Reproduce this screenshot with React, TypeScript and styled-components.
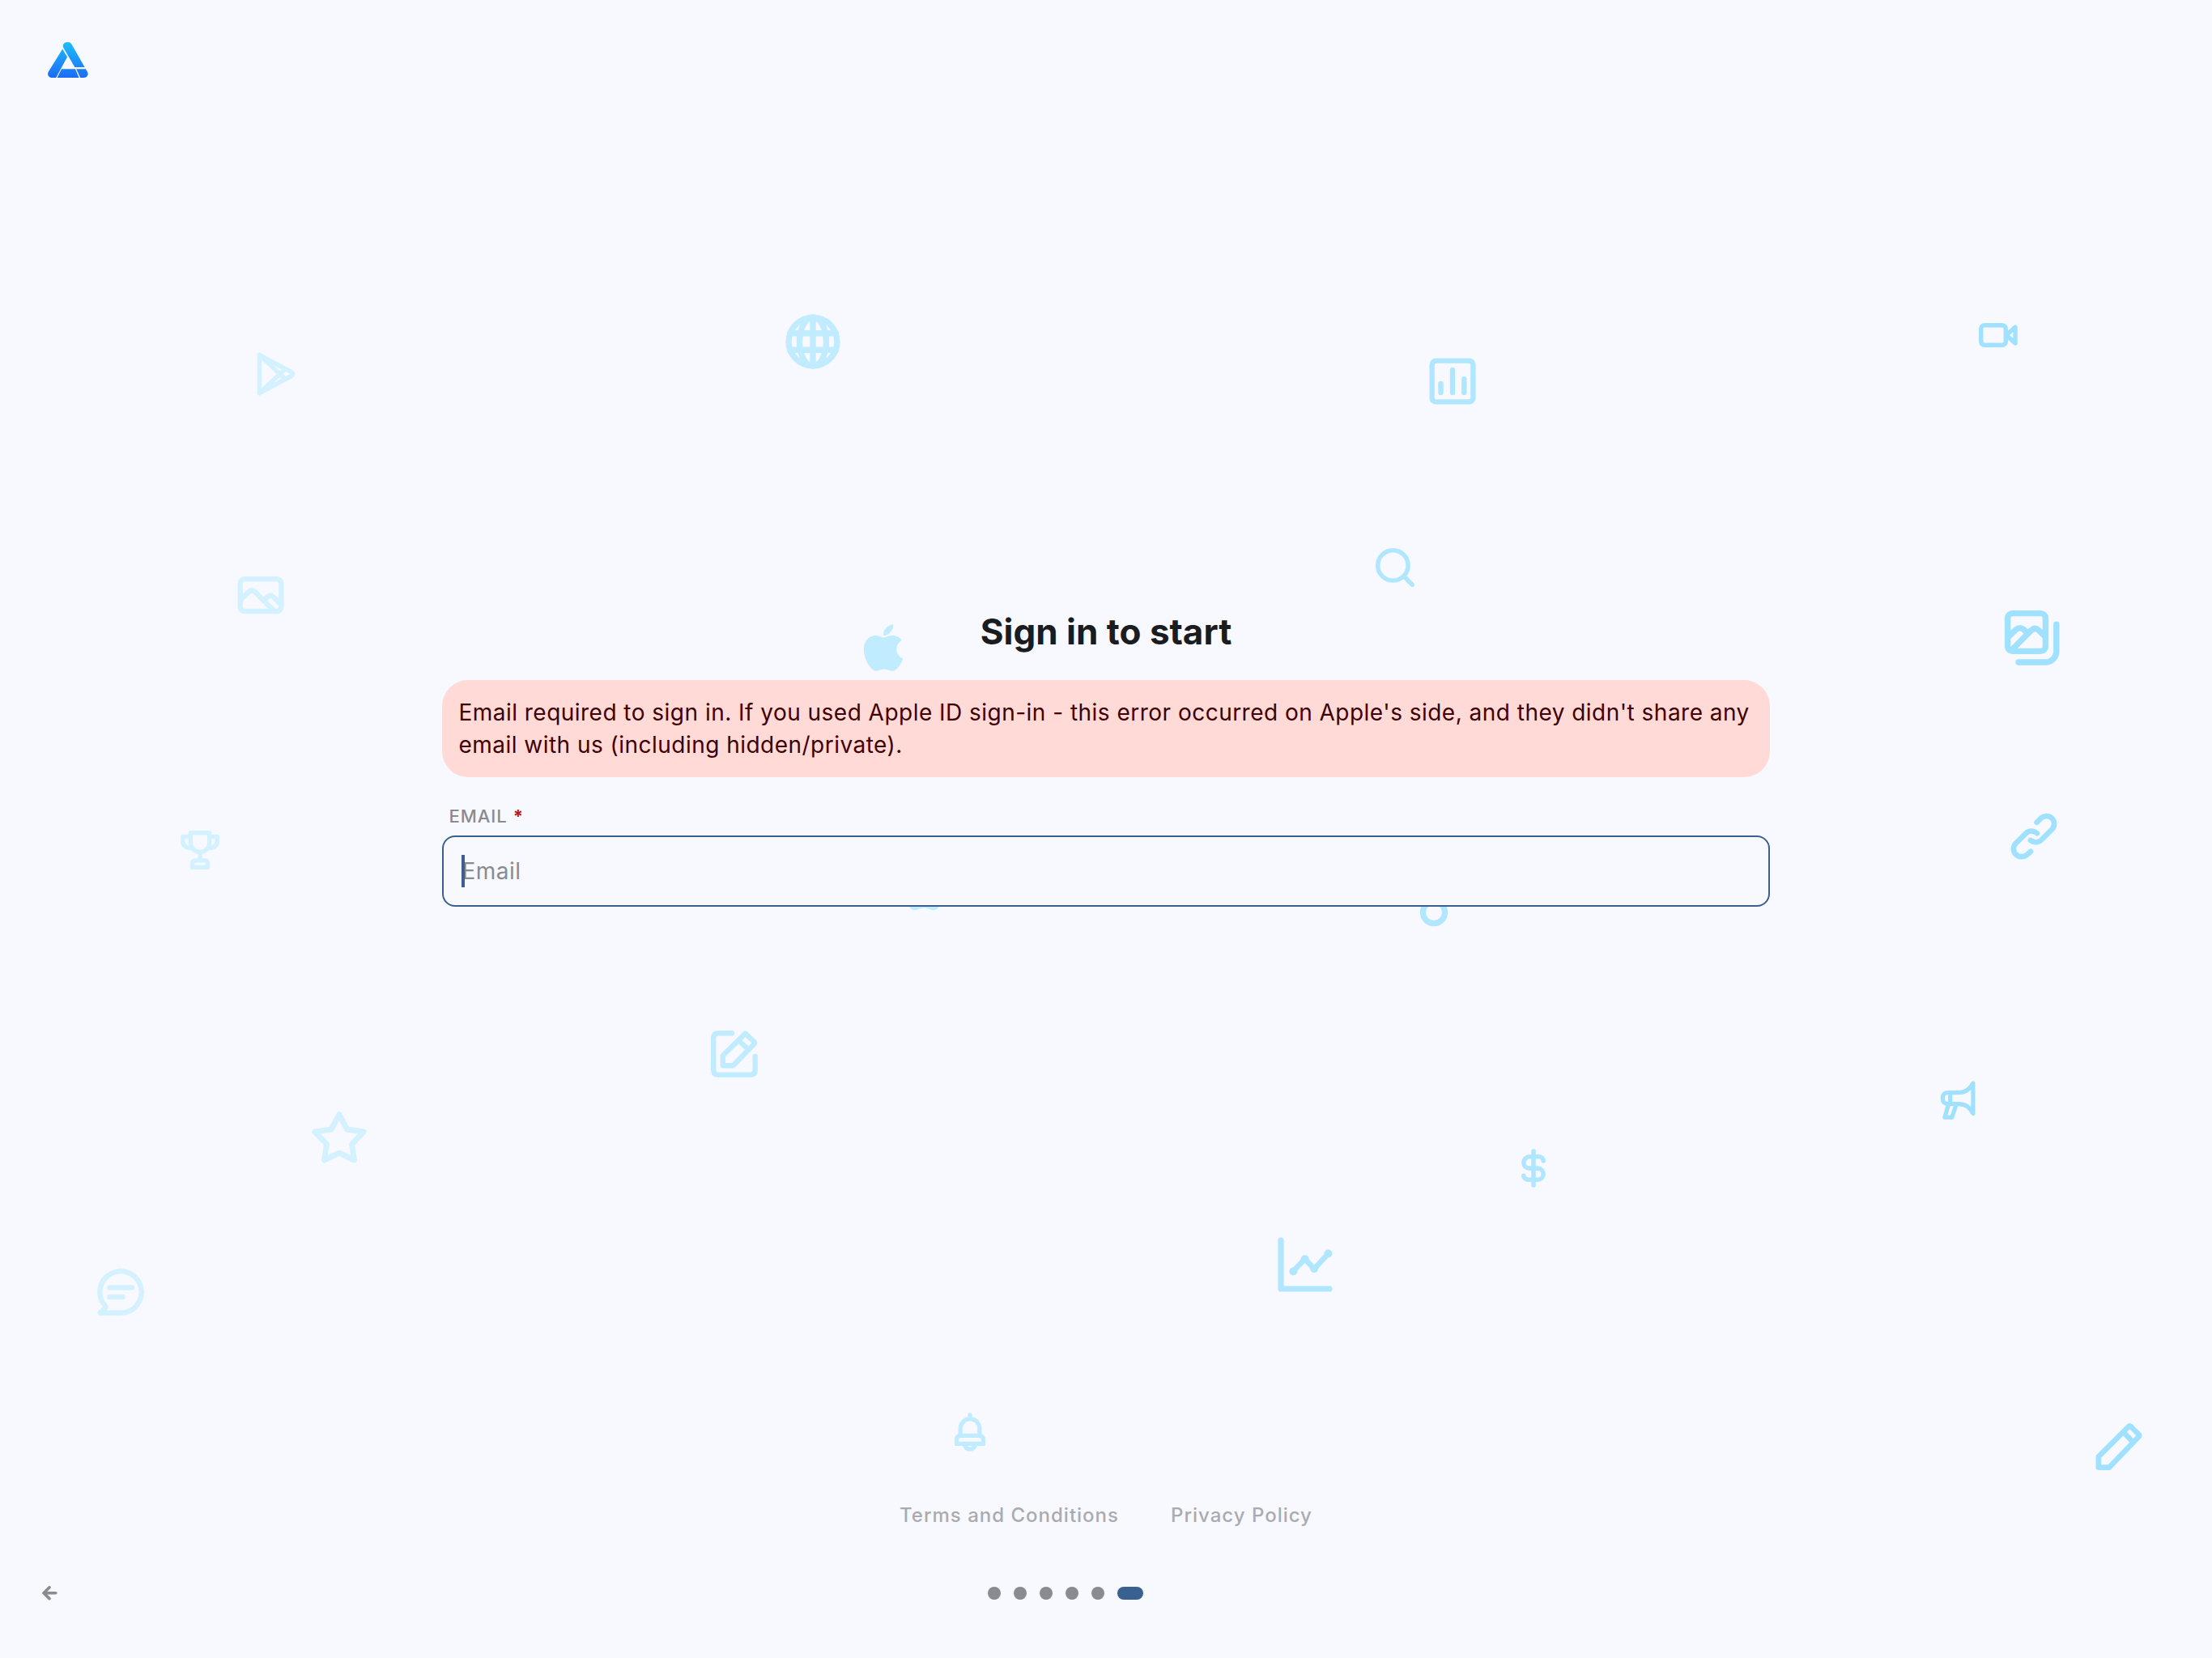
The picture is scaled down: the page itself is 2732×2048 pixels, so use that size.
import React from "react";
import styled, { createGlobalStyle } from "styled-components";
import { FaApple } from "react-icons/fa";

const color = {
  surface: "#f8f9ff",
  text: "#191c20",
  primary: "#3a608f",
  errorSurface: "#ffdad6",
  errorText: "#410002",
  required: "#ba1a1a",
  muted: "#898b90",
  link: "#a9abb0",
};

/* Doodles get stronger from the left edge of the page to the right. */
const tint = {
  faint: "#d4f1ff",
  soft: "#c1ebff",
  medium: "#b1e6ff",
  strong: "#a0e1ff",
};

const GlobalStyle = createGlobalStyle`
  *, *::before, *::after { box-sizing: border-box; }
  body {
    margin: 0;
    background: ${color.surface};
    color: ${color.text};
    font-family: Inter, Roboto, "Liberation Sans", sans-serif;
    -webkit-font-smoothing: antialiased;
  }
`;

const Page = styled.div`
  position: relative;
  display: flex;
  flex-direction: column;
  min-height: 100vh;
  padding-bottom: 40px;
  overflow: hidden;
`;

const Header = styled.header`
  position: relative;
  display: flex;
  align-items: flex-end;
  height: 112px;
  padding: 0 59px 16px;
`;

const Main = styled.main`
  position: relative;
  flex: 1;
  display: flex;
  flex-direction: column;
  align-items: center;
  justify-content: center;
  padding-bottom: 100px;
`;

const SignInForm = styled.form`
  display: flex;
  flex-direction: column;
  width: 60%;
`;

const Title = styled.h1`
  margin: 0 0 28px;
  font-size: 44px;
  line-height: 64px;
  font-weight: 700;
  text-align: center;
`;

const Alert = styled.p`
  margin: 0 0 32px;
  padding: 20px;
  border-radius: 32px;
  background: ${color.errorSurface};
  color: ${color.errorText};
  font-size: 28px;
  line-height: 40px;
  letter-spacing: 0.017em;
`;

const FieldLabel = styled.label`
  margin-bottom: 8px;
  padding-left: 8px;
  color: ${color.muted};
  font-size: 22px;
  line-height: 32px;
  font-weight: 500;
  letter-spacing: 1px;
`;

const Required = styled.span`
  color: ${color.required};
  font-weight: 700;
`;

const Field = styled.div`
  position: relative;
`;

const TextInput = styled.input`
  display: block;
  width: 100%;
  height: 88px;
  padding: 0 22px;
  border: 2px solid ${color.primary};
  border-radius: 16px;
  outline: none;
  background: ${color.surface};
  color: ${color.text};
  caret-color: transparent;
  font: 400 28px/40px Inter, Roboto, "Liberation Sans", sans-serif;
  letter-spacing: 0.017em;

  &::placeholder {
    color: ${color.muted};
    opacity: 1;
  }
`;

const Caret = styled.span`
  position: absolute;
  top: 24px;
  left: 24px;
  width: 4px;
  height: 40px;
  background: ${color.primary};
`;

const LegalNav = styled.nav`
  position: relative;
  display: flex;
  justify-content: center;
  gap: 64px;
  padding-bottom: 40px;
`;

const LegalLink = styled.a`
  color: ${color.link};
  font-size: 24px;
  line-height: 32px;
  font-weight: 500;
  letter-spacing: 1px;
  text-decoration: none;
`;

const Footer = styled.footer`
  position: relative;
  display: grid;
  grid-template-columns: 60px 1fr 160px;
  align-items: center;
  height: 80px;
  padding: 0 32px;
`;

const BackButton = styled.button`
  display: flex;
  align-items: center;
  width: 60px;
  height: 60px;
  padding: 0 20px;
  border: 0;
  background: none;
  color: ${color.muted};
  cursor: pointer;
`;

const Steps = styled.ol`
  display: flex;
  justify-content: center;
  gap: 16px;
  margin: 0;
  padding: 0;
  list-style: none;
`;

const Step = styled.li<{ $active: boolean }>`
  width: ${(p) => (p.$active ? 32 : 16)}px;
  height: 16px;
  border-radius: 8px;
  background: ${(p) => (p.$active ? color.primary : color.muted)};
`;

const DoodleLayer = styled.div`
  position: absolute;
  inset: 0;
`;

/* x and y are the centre of the doodle in percent of the page. */
const DoodleSpot = styled.span<{ $x: number; $y: number; $tint: string }>`
  position: absolute;
  left: ${(p) => p.$x}%;
  top: ${(p) => p.$y}%;
  transform: translate(-50%, -50%);
  color: ${(p) => p.$tint};

  svg {
    display: block;
    overflow: visible;
  }
`;

interface DrawingProps {
  w: number;
  h: number;
  stroke: number;
  children: React.ReactNode;
}

const Drawing = ({ w, h, stroke, children }: DrawingProps) => (
  <svg
    width={w}
    height={h}
    viewBox={`0 0 ${w} ${h}`}
    fill="none"
    stroke="currentColor"
    strokeWidth={stroke}
    strokeLinecap="round"
    strokeLinejoin="round"
    aria-hidden="true"
  >
    {children}
  </svg>
);

const PlayStore = () => (
  <Drawing w={47} h={53} stroke={5.5}>
    <path d="M3 3V50L43 28.5Q45.5 26.5 43 24.5Z" />
    <path d="M3 3L34 32M3 50L34 21" />
  </Drawing>
);

const Globe = () => (
  <Drawing w={67} h={67} stroke={7.4}>
    <circle cx="33.5" cy="33.5" r="29.9" />
    <ellipse cx="33.5" cy="33.5" rx="16.5" ry="30" />
    <path d="M33.5 3.5V63.5M5 23.3H62M5 43.7H62" />
  </Drawing>
);

const Picture = () => (
  <Drawing w={57} h={46} stroke={6.4}>
    <rect x="3.2" y="3.2" width="50.6" height="39.8" rx="5.5" />
    <path d="M3.5 29L14 18.8Q17.5 15.6 21 18.8L45.5 43" />
    <path d="M33.8 28.4L37 25Q40.3 22 43.8 25L53.5 34.5" />
  </Drawing>
);

const BarChart = () => (
  <Drawing w={57} h={57} stroke={6.4}>
    <rect x="3.1" y="3.1" width="50.8" height="50.8" rx="5" />
    <path d="M14 31.4V42.4M28.5 14.4V42.4M42.8 25.8V42.4" />
  </Drawing>
);

const Video = () => (
  <Drawing w={48} h={30} stroke={5.4}>
    <rect x="2.7" y="2.7" width="30.6" height="24.6" rx="4.5" />
    <path d="M45 5V25L34 15Z" />
  </Drawing>
);

const Gallery = () => (
  <Drawing w={68} h={68} stroke={7.4}>
    <rect x="3.6" y="3.6" width="46.8" height="46.8" rx="6" />
    <path d="M63.8 17.3V50.5A13.5 13.5 0 0 1 50.3 64H17" />
    <path d="M4.5 32.5L14.2 23.4Q18.7 20 23.2 23.4L28.5 28.5" />
    <path d="M9.5 48L33 24.4Q37.3 20.4 41.8 24.4L49.8 32" />
  </Drawing>
);

const LinkChain = () => (
  <Drawing w={57} h={57} stroke={6.6}>
    <path d="M32 11.3L37.4 6.2C41.2 2.6 47.3 2.6 50.8 6.2C54.6 10 54.6 16 50.8 20L38.3 32.5C34.5 36.3 29 36.8 24.3 33.5" />
    <path d="M24.5 47.2L20 51.2C16 54.6 9.8 54.4 6.2 50.8C2.4 47 2.4 41 6.2 37.2L18.7 24.8C22.4 21.2 28 21.2 32.4 24.8" />
  </Drawing>
);

const Trophy = () => (
  <Drawing w={48} h={49} stroke={5.4}>
    <path d="M12.3 3.2H35.7V15.2A11.7 11.7 0 0 1 12.3 15.2Z" />
    <path d="M12 8H2.8V13.5Q2.8 21.5 12.5 22M36 8H45.2V13.5Q45.2 21.5 35.5 22" />
    <path d="M24 27V37" />
    <path d="M14.4 45.8V42Q14.4 37.4 19 37.4H29Q33.6 37.4 33.6 42V45.8Z" />
  </Drawing>
);

const Compose = () => (
  <Drawing w={58} h={58} stroke={6.4}>
    <path d="M26 3.2H9Q3.2 3.2 3.2 9V48.8Q3.2 54.6 9 54.6H48.8Q54.6 54.6 54.6 48.8V32" />
    <path d="M42.5 3.6L53.2 13.6Q54.6 15.2 53.2 16.8L27.6 43.2H14.8V30.8Z" />
    <path d="M34.5 12.5L46 23" />
  </Drawing>
);

const Star = () => (
  <Drawing w={67} h={64} stroke={7}>
    <path d="M33.5 3.6L43.2 22L63.6 25L49 40.3L52 60L33.5 51.2L15 60L18 40.3L3.4 25L23.8 22Z" />
  </Drawing>
);

const Chat = () => (
  <Drawing w={58} h={58} stroke={6.4}>
    <path d="M29 54.7A25.7 25.7 0 1 0 9.6 45.8Q11.4 47.4 9.8 49L3.6 54.7Z" />
    <path d="M15.4 23.5H43M15.4 35H31.5" />
  </Drawing>
);

const Bell = () => (
  <Drawing w={38} h={48} stroke={5.2}>
    <path d="M19 2.6V7M7.2 28V19.5A11.8 11.8 0 0 1 30.8 19.5V28" />
    <path d="M2.5 38.4V33.5Q2.5 28.4 7.5 28.4H30.5Q35.5 28.4 35.5 33.5V38.4Z" />
    <path d="M12.4 39.5Q14 45.2 19 45.2T25.6 39.5" />
  </Drawing>
);

const LineChart = () => (
  <Drawing w={67} h={67} stroke={7.2}>
    <path d="M3.5 3.5V63.5H63.5" />
    <path d="M18.5 42L33.2 26.5L44.6 39L62 20" strokeWidth={6.8} />
    <g fill="currentColor" stroke="none">
      <circle cx="18.8" cy="42" r="5" />
      <circle cx="33.2" cy="26.8" r="5" />
      <circle cx="44.6" cy="38.6" r="5" />
      <circle cx="62" cy="20" r="5" />
    </g>
  </Drawing>
);

const Dollar = () => (
  <Drawing w={30} h={48} stroke={5.6}>
    <path d="M15 3V45" />
    <path d="M27.2 14.8C27.2 11.8 24.5 9.8 21 9.8H10.3C6 9.8 2.8 13 2.8 17C2.8 21 6 24.1 10.3 24.1H19.8C24 24.1 27.2 27.2 27.2 31.2C27.2 35.2 24 38.2 19.8 38.2H9C5.5 38.2 2.8 36.2 2.8 33.2" />
  </Drawing>
);

const Megaphone = () => (
  <Drawing w={43} h={48} stroke={5.2}>
    <path d="M40.4 3V40.4C36.5 32.5 31 28.6 22.5 28.6H9.3Q2.8 28.6 2.8 21.6T9.3 14.6H22.5C31 14.6 36.5 10.5 40.4 3Z" />
    <path d="M12.2 15V28M9.8 30L5.4 45.2H14.3L19.6 29.5" />
  </Drawing>
);

const Pencil = () => (
  <Drawing w={57} h={58} stroke={6.6}>
    <path d="M40.6 4Q41.9 2.8 43.2 4L53 13.8Q54.4 15.2 53 16.6L16.5 54.6H3.3V41.4Z" />
    <path d="M34.5 11.5L45.6 22.8" />
  </Drawing>
);

const Magnifier = () => (
  <Drawing w={48} h={48} stroke={5.5}>
    <circle cx="21.4" cy="21.4" r="18.7" />
    <path d="M35.5 35.5L45.2 45.2" />
  </Drawing>
);

const Apple = () => <FaApple size={66} aria-hidden="true" />;

const LargeApple = () => <FaApple size={76} aria-hidden="true" />;

const Ring = () => (
  <Drawing w={34} h={48} stroke={7.2}>
    <circle cx="17" cy="31" r="13.6" />
  </Drawing>
);

const doodles = [
  { Icon: PlayStore, x: 12.49, y: 22.56, tint: tint.faint },
  { Icon: Globe, x: 36.75, y: 20.6, tint: tint.soft },
  { Icon: BarChart, x: 65.68, y: 22.99, tint: tint.medium },
  { Icon: Video, x: 90.32, y: 20.22, tint: tint.strong },
  { Icon: Magnifier, x: 63.07, y: 34.23, tint: tint.medium },
  { Icon: Picture, x: 11.77, y: 35.89, tint: tint.faint },
  { Icon: Apple, x: 39.94, y: 39.06, tint: tint.soft },
  { Icon: Gallery, x: 91.87, y: 38.46, tint: tint.strong },
  { Icon: LinkChain, x: 91.95, y: 50.46, tint: tint.strong },
  { Icon: Trophy, x: 9.05, y: 51.27, tint: tint.faint },
  { Icon: LargeApple, x: 41.73, y: 53.27, tint: tint.soft },
  { Icon: Ring, x: 64.83, y: 54.69, tint: tint.medium },
  { Icon: Compose, x: 33.2, y: 63.57, tint: tint.soft },
  { Icon: Star, x: 15.34, y: 68.58, tint: tint.faint },
  { Icon: Megaphone, x: 88.52, y: 66.36, tint: tint.strong },
  { Icon: Dollar, x: 69.34, y: 70.46, tint: tint.medium },
  { Icon: LineChart, x: 59.01, y: 76.25, tint: tint.medium },
  { Icon: Chat, x: 5.44, y: 77.92, tint: tint.faint },
  { Icon: Bell, x: 43.85, y: 86.38, tint: tint.soft },
  { Icon: Pencil, x: 95.8, y: 87.26, tint: tint.strong },
];

const Logo = () => (
  <svg width="50" height="44" viewBox="0 0 50 44" role="img" aria-label="Home">
    <defs>
      <linearGradient id="logo-fill" gradientUnits="userSpaceOnUse" x1="25" y1="0" x2="25" y2="44">
        <stop offset="0" stopColor="#1fbdff" />
        <stop offset="1" stopColor="#1b6cf5" />
      </linearGradient>
    </defs>
    <g fill="url(#logo-fill)">
      <path d="M19.5 7.2C17.6 3 20.4 0 24.6 0C27 0 28.8 1.2 30 3.4L45.6 31H33.4Z" />
      <path d="M18.2 8.6L24 18.4L10.2 44H5.4C1 44 -1.2 40 .9 36.4Z" />
      <path d="M17 33.2H34L38.6 44H11.6Z" />
      <path d="M35.2 33.2H46.8L48.8 36.6C50.8 40 48.8 44 44.8 44H40.2Z" />
    </g>
  </svg>
);

const stepCount = 6;
const activeStep = 5;

export default function App() {
  return (
    <>
      <GlobalStyle />
      <Page>
        <DoodleLayer aria-hidden="true">
          {doodles.map(({ Icon, x, y, tint: shade }) => (
            <DoodleSpot key={`${x}-${y}`} $x={x} $y={y} $tint={shade}>
              <Icon />
            </DoodleSpot>
          ))}
        </DoodleLayer>

        <Header>
          <Logo />
        </Header>

        <Main>
          <SignInForm onSubmit={(e) => e.preventDefault()}>
            <Title>Sign in to start</Title>
            <Alert role="alert">
              Email required to sign in. If you used Apple ID sign-in - this error occurred on
              Apple's side, and they didn't share any email with us (including hidden/private).
            </Alert>
            <FieldLabel htmlFor="email">
              EMAIL <Required>*</Required>
            </FieldLabel>
            <Field>
              <TextInput id="email" type="email" placeholder="Email" required />
              <Caret />
            </Field>
          </SignInForm>
        </Main>

        <LegalNav aria-label="Legal">
          <LegalLink href="#terms">Terms and Conditions</LegalLink>
          <LegalLink href="#privacy">Privacy Policy</LegalLink>
        </LegalNav>

        <Footer>
          <BackButton type="button" aria-label="Back">
            <Drawing w={19} h={18} stroke={3.6}>
              <path d="M16.8 8.7H2M9 1.8L2 8.7L9 15.6" />
            </Drawing>
          </BackButton>
          <Steps>
            {Array.from({ length: stepCount }, (_, i) => (
              <Step key={i} $active={i === activeStep} />
            ))}
          </Steps>
        </Footer>
      </Page>
    </>
  );
}
